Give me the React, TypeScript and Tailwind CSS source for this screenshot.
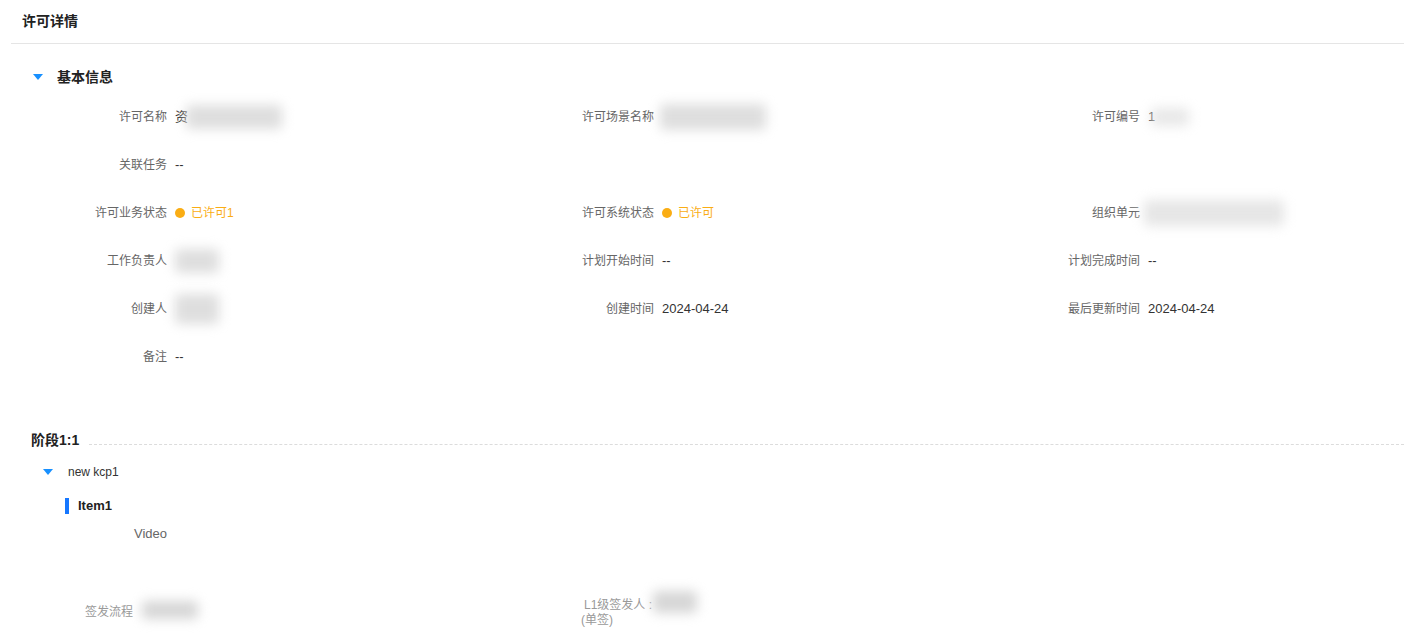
import React from 'react';

const font = { fontFamily: '"Liberation Sans", "Noto Sans CJK SC", sans-serif' };

const Blur: React.FC<{ w: number; h: number; shade?: string; className?: string }> = ({ w, h, shade = 'bg-[#dedede]', className = '' }) => (
  <span
    className={`inline-block align-middle rounded-sm blur-[6px] ${shade} ${className}`}
    style={{ width: w, height: h }}
  />
);

const Caret: React.FC = () => (
  <svg width="10" height="7" viewBox="0 0 10 7" className="shrink-0">
    <path d="M0 0 H10 L5 6 Z" fill="#1890ff" />
  </svg>
);

const Status: React.FC<{ text: string }> = ({ text }) => (
  <span className="flex items-center gap-[6px] text-[#faad14] text-[12px]">
    <span className="w-[10px] h-[10px] rounded-full bg-[#faad14]" />
    {text}
  </span>
);

type Field = { label: string; value: React.ReactNode };

const rows: Field[][] = [
  [
    { label: '许可名称', value: <span className="flex items-center">资<Blur w={96} h={24} className="-ml-[2px]" /></span> },
    { label: '许可场景名称', value: <Blur w={106} h={26} className="-ml-[2px]" /> },
    { label: '许可编号', value: <span className="flex items-center">1<Blur w={38} h={18} className="-ml-[4px]" shade="bg-[#e8e8e8]" /></span> },
  ],
  [
    { label: '关联任务', value: '--' },
    { label: '', value: null },
    { label: '', value: null },
  ],
  [
    { label: '许可业务状态', value: <Status text="已许可1" /> },
    { label: '许可系统状态', value: <Status text="已许可" /> },
    { label: '组织单元', value: <Blur w={140} h={26} className="-ml-[4px]" shade="bg-[#e6e6e6]" /> },
  ],
  [
    { label: '工作负责人', value: <Blur w={44} h={24} /> },
    { label: '计划开始时间', value: '--' },
    { label: '计划完成时间', value: '--' },
  ],
  [
    { label: '创建人', value: <Blur w={44} h={30} /> },
    { label: '创建时间', value: '2024-04-24' },
    { label: '最后更新时间', value: '2024-04-24' },
  ],
  [
    { label: '备注', value: '--' },
    { label: '', value: null },
    { label: '', value: null },
  ],
];

const App: React.FC = () => {
  return (
    <div className="min-h-[640px] bg-white text-[#333] overflow-hidden" style={font}>
      {/* header */}
      <div className="ml-[11px] h-[44px] flex items-center pl-[11px] border-b border-[#e5e5e5]">
        <span className="text-[14px] font-bold text-[#222]">许可详情</span>
      </div>

      {/* basic info */}
      <div className="mt-[23px] pl-[33px] h-[20px] flex items-center gap-[14px]">
        <Caret />
        <span className="text-[14px] font-bold text-[#222]">基本信息</span>
      </div>

      <div className="mt-[6px] pl-[47px]">
        {rows.map((row, i) => (
          <div key={i} className="grid grid-cols-[487px_486px_1fr] h-[48px] items-center text-[12px]">
            {row.map((f, j) => (
              <div key={j} className="flex items-center">
                <span className="w-[120px] text-right text-[#666] shrink-0">{f.label}</span>
                <span className="ml-[8px] flex items-center text-[#333] text-[13px]">{f.value}</span>
              </div>
            ))}
          </div>
        ))}
      </div>

      {/* stage */}
      <div className="mt-[49px] pl-[31px] flex items-center">
        <span className="text-[14px] font-bold text-[#222] leading-[20px]">阶段1:1</span>
        <span className="flex-1 ml-[10px] mt-[8px] border-t border-dashed border-[#dcdcdc]" />
      </div>

      <div className="mt-[12px] pl-[43px] h-[20px] flex items-center gap-[15px]">
        <Caret />
        <span className="text-[12px] text-[#333]">new kcp1</span>
      </div>

      <div className="mt-[16px] pl-[65px] h-[16px] flex items-center">
        <span className="w-[4px] h-[16px] bg-[#1677ff]" />
        <span className="ml-[9px] text-[13px] font-bold text-[#222]">Item1</span>
      </div>

      <div className="mt-[10px] pl-[134px] text-[13px] text-[#666] leading-[20px]">Video</div>

      <div className="mt-[49px] pl-[85px] flex items-start text-[12px] text-[#999]">
        <div className="w-[496px] flex items-center">
          <span className="mt-[10px]">签发流程</span>
          <Blur w={56} h={18} className="ml-[9px] mt-[6px]" shade="bg-[#d6d6d6]" />
        </div>
        <div className="flex items-start">
          <span className="w-[72px] mt-[5px] leading-[15px] indent-[3px]">L1级签发人 : (单签)</span>
          <Blur w={44} h={22} className="-mt-[2px]" shade="bg-[#d6d6d6]" />
        </div>
      </div>
    </div>
  );
};

export default App;
